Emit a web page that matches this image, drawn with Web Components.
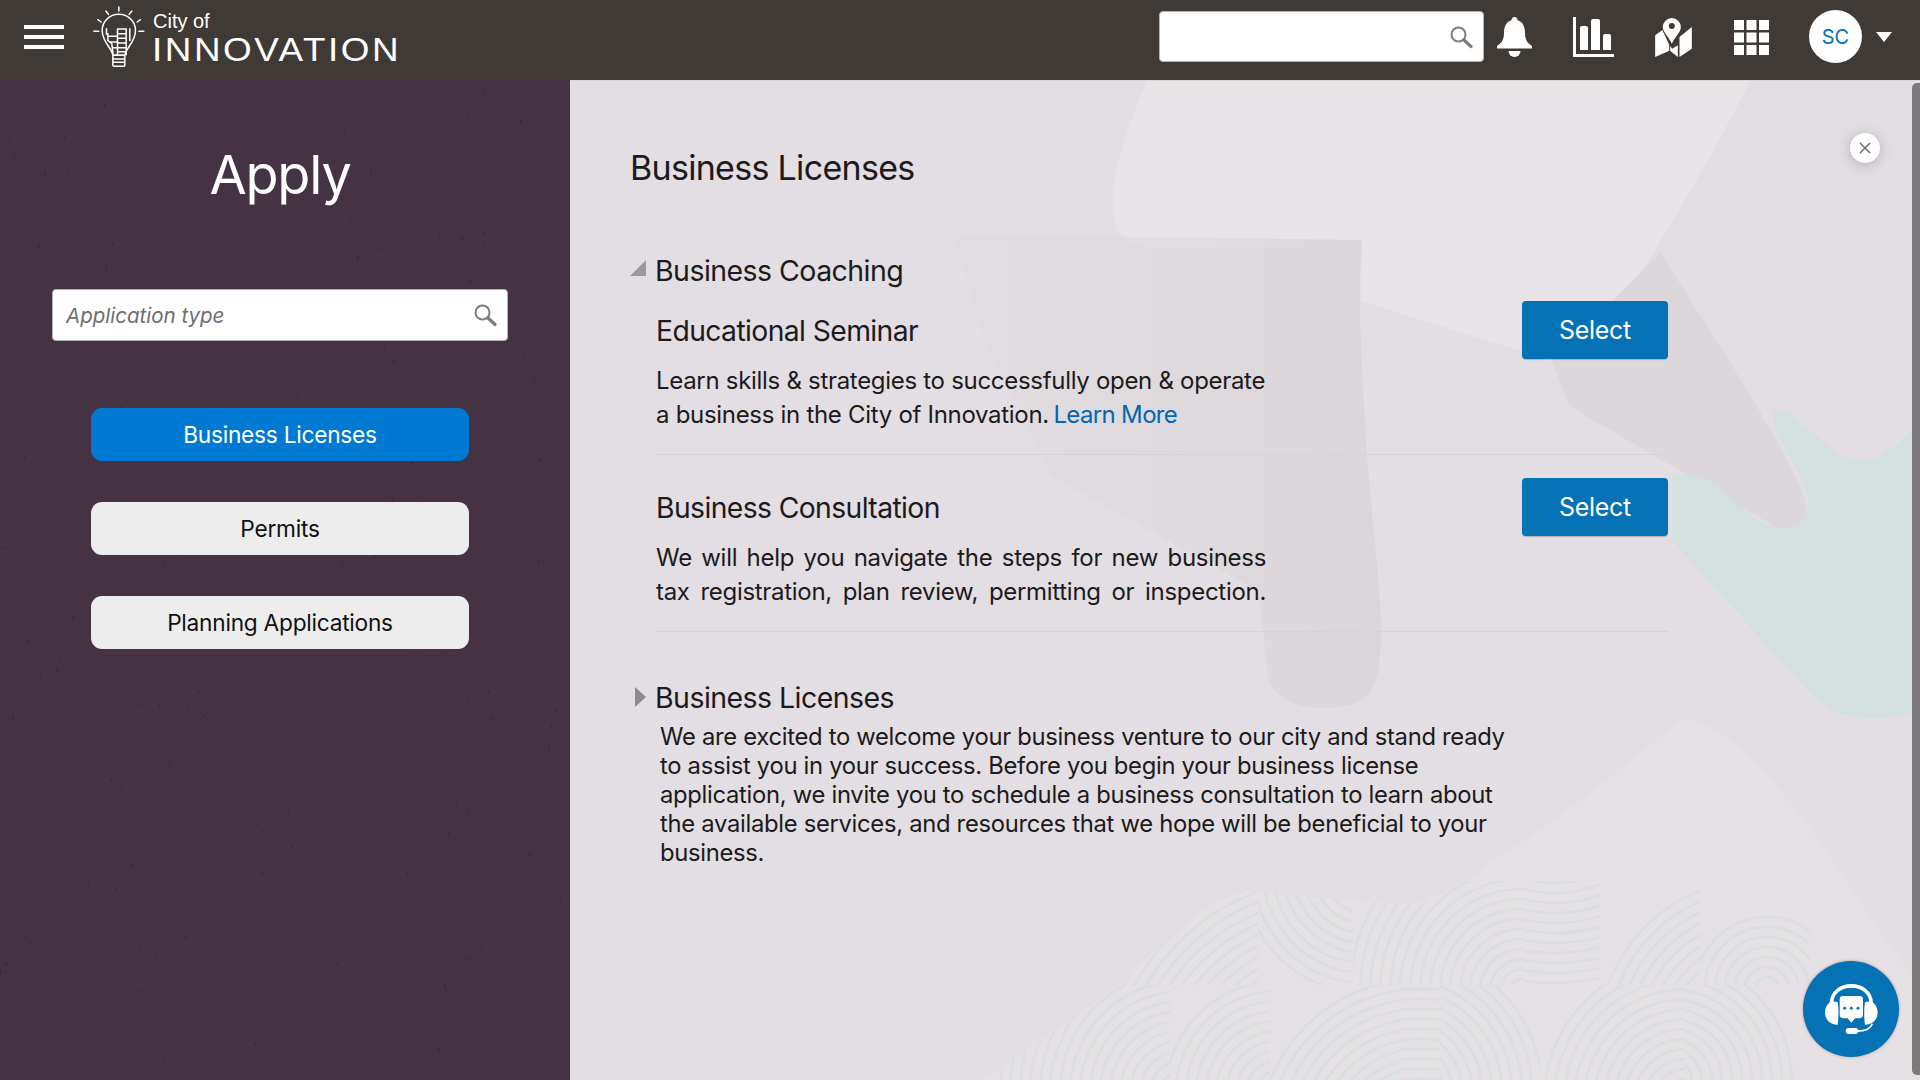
<!DOCTYPE html>
<html lang="en">
<head>
<meta charset="utf-8">
<title>Apply - City of Innovation</title>
<style>
  html, body { margin: 0; height: 100%; overflow: hidden; }
  body { font-family: Inter, "Liberation Sans", sans-serif; }
  #shell { display: flex; flex-direction: column; height: 1080px; }
  #body-row { display: flex; flex: 1; min-height: 0; }
</style>
</head>
<body>
<div id="shell">
  <top-bar></top-bar>
  <div id="body-row">
    <apply-panel heading="Apply">
      <nav-button active>Business Licenses</nav-button>
      <nav-button>Permits</nav-button>
      <nav-button>Planning Applications</nav-button>
    </apply-panel>
    <detail-panel heading="Business Licenses">
      <group-header open>Business Coaching</group-header>
      <service-row heading="Educational Seminar">Learn skills &amp; strategies to successfully open &amp; operate<br>a business in the City of Innovation. <a href="#">Learn More</a></service-row>
      <service-row heading="Business Consultation" spread>We will help you navigate the steps for new business<br>tax registration, plan review, permitting or inspection.</service-row>
      <group-header class="second">Business Licenses</group-header>
      <intro-text>We are excited to welcome your business venture to our city and stand ready<br>to assist you in your success. Before you begin your business license<br>application, we invite you to schedule a business consultation to learn about<br>the available services, and resources that we hope will be beneficial to your<br>business.</intro-text>
    </detail-panel>
  </div>
</div>
<script>
const SEARCH_ICON = `<svg viewBox="0 0 24 24" width="24" height="24" fill="none" stroke="#7d7d7d">
  <circle cx="9.5" cy="9.5" r="7" stroke-width="2"/><path d="M15 15l7 6.5" stroke-width="3.2" stroke-linecap="round"/></svg>`;

class SearchField extends HTMLElement {
  constructor() {
    super();
    this.attachShadow({ mode: 'open' });
    const label = this.getAttribute('placeholder') || '';
    this.shadowRoot.innerHTML = `
      <style>
        :host { display: flex; box-sizing: border-box; align-items: center; justify-content: space-between;
          background: #fff; border: 1px solid #b9b4b6; border-radius: 4px; padding: 0 10px 0 13px; }
        span { font: italic 20.5px Inter, "Liberation Sans", sans-serif; color: #6f6f6f; }
      </style>
      <span>${label}</span>${SEARCH_ICON}`;
  }
}
customElements.define('search-field', SearchField);

class TopBar extends HTMLElement {
  constructor() {
    super();
    this.attachShadow({ mode: 'open' });
    this.shadowRoot.innerHTML = `
      <style>
        :host { display: flex; height: 80px; flex: none; align-items: center; background: #3f3a35; color: #fff; }
        .burger { display: flex; flex-direction: column; gap: 6px; margin: -6px 0 0 24px; }
        .burger i { display: block; width: 40px; height: 4px; background: #fff; }
        .bulb { margin: -11px 0 0 24px; flex: none; }
        .brand { display: flex; flex-direction: column; margin: -3px 0 0 4px; font-family: "Liberation Sans", sans-serif; }
        .city { font-size: 20px; line-height: normal; margin: 2px 0 -2px 1px; }
        .name { font-size: 33.5px; line-height: normal; letter-spacing: 2.3px; transform: scaleX(1.1); transform-origin: left; }
        .tools { display: flex; align-items: center; margin-left: auto; height: 100%; }
        search-field { width: 325px; height: 51px; margin-top: -7px; }
        svg.tool { display: block; margin-top: -6px; fill: #fff; }
        .avatar { width: 53px; height: 53px; border-radius: 50%; background: #fff; color: #0572b5; display: flex;
          align-items: center; justify-content: center; font: 20px Inter, "Liberation Sans", sans-serif; margin: -7px 0 0 40px; }
        .caret { width: 0; height: 0; border: 8px solid transparent; border-top: 10px solid #fff; border-bottom: 0; margin: -7px 28px 0 14px; }
      </style>
      <div class="burger"><i></i><i></i><i></i></div>
      <svg class="bulb" width="60" height="64" viewBox="30 8 165 192" fill="none" stroke="#fff" stroke-width="4.5">
        <path d="M115 20v12M76 32l8 10M154 32l-8 10M52 58l10 7M180 58l-10 7M40 93h15M175 93h15" stroke-linecap="round"/>
        <path d="M97 165c-2-22-32-38-32-75a50 48 0 0 1 100 0c0 37-30 53-32 75z"/>
        <rect x="97" y="165" width="36" height="33" rx="4"/>
        <path d="M97 176h36M97 186h36M111 165V86h26v79M111 100h26M111 114h26M111 128h26M111 142h26M111 154h26M111 108l-28 0M82 98v22l12 10 4 35M111 125l-21 0M111 142l-15 0M148 84v38M78 84v20"/>
      </svg>
      <div class="brand"><span class="city">City of</span><span class="name">INNOVATION</span></div>
      <div class="tools">
        <search-field></search-field>
        <svg class="tool" style="margin-left:13px" width="35" height="40" viewBox="0 0 35 40">
          <path d="M17.5 0c2 0 3 1.500 3 3.200 5.500 1.600 7.500 6.500 7.500 12.800 0 6 2 10 7 13v2.500H0V29c5-3 7-7 7-13 0-6.300 2-11.200 7.500-12.800 0-1.700 1-3.200 3-3.200z"/>
          <path d="M11.500 34h12a6 6 0 0 1-12 0z"/>
        </svg>
        <svg class="tool" style="margin-left:41px" width="41" height="40" viewBox="0 0 41 40">
          <path d="M0 0h3v37h38v3H0z"/>
          <path d="M7 11a2 2 0 0 1 2-2h4a2 2 0 0 1 2 2v22H7zM18 4a2 2 0 0 1 2-2h5a2 2 0 0 1 2 2v29h-9zM30 19a2 2 0 0 1 2-2h4a2 2 0 0 1 2 2v14h-8z"/>
        </svg>
        <svg class="tool" style="margin-left:41px" width="37" height="39" viewBox="525 38 110 117">
          <path d="M525 90l22-16 20 44v18l-42 19zM570 122l6 8 17-10v35l-23-19zM598 95l37-30v65l-37 25z"/>
          <path d="M575 38a27 27 0 0 1 27 27c0 16-18 30-27 50-9-20-27-34-27-50a27 27 0 0 1 27-27z" stroke="#3f3a35" stroke-width="6" paint-order="stroke"/>
          <circle cx="575" cy="62" r="9" fill="#3f3a35"/>
        </svg>
        <svg class="tool" style="margin-left:42px" width="35" height="35" viewBox="0 0 35 35">
          <path d="M0 0h10v10H0zM12.500 0h10v10h-10zM25 0h10v10H25zM0 12.500h10v10H0zM12.500 12.500h10v10h-10zM25 12.500h10v10H25zM0 25h10v10H0zM12.500 25h10v10h-10zM25 25h10v10H25z"/>
        </svg>
        <div class="avatar">SC</div>
        <div class="caret"></div>
      </div>`;
  }
}
customElements.define('top-bar', TopBar);

class NavButton extends HTMLElement {
  constructor() {
    super();
    this.attachShadow({ mode: 'open' });
    this.shadowRoot.innerHTML = `
      <style>
        :host { display: flex; width: 378px; height: 53px; align-items: center; justify-content: center; box-sizing: border-box;
          border-radius: 11px; background: #eeeded; color: #111; font-size: 22.700px; letter-spacing: -0.25px; }
        :host([active]) { background: #0079d3; color: #fff; }
      </style>
      <slot></slot>`;
  }
}
customElements.define('nav-button', NavButton);

class ApplyPanel extends HTMLElement {
  constructor() {
    super();
    this.attachShadow({ mode: 'open' });
    // little dark specks in loose clumps, same seed every time
    let seed = 918273, specks = '';
    const rnd = () => {
      seed = (seed * 48271) % 2147483647;
      return ((seed * 48271) % 2147483647) / 2147483647;
    };
    for (let c = 0; c < 90; c++) {
      const cx = rnd() * 570, cy = rnd() * 1000, n = 1 + Math.floor(rnd() * 6);
      for (let i = 0; i < n; i++) {
        const x = (cx + (rnd() - 0.5) * 44).toFixed(1), y = (cy + (rnd() - 0.5) * 44).toFixed(1);
        const h = (1 + rnd() * 4).toFixed(1), a = (rnd() * 50 - 25).toFixed(0), o = (0.12 + rnd() * 0.4).toFixed(2);
        specks += `<rect x="${x}" y="${y}" width="1.300" height="${h}" opacity="${o}" transform="rotate(${a} ${x} ${y})"/>`;
      }
    }
    this.shadowRoot.innerHTML = `
      <style>
        :host { display: flex; position: relative; flex-direction: column; align-items: center; flex: none; width: 570px;
          background: #453343; box-sizing: border-box; padding: 63px 10px 0 0; overflow: hidden; }
        .specks { position: absolute; inset: 0; fill: #2a1f2b; }
        h1 { position: relative; margin: 0; font-size: 54px; line-height: 64px; font-weight: 400; color: #fff; letter-spacing: -1.200px; }
        search-field { position: relative; width: 456px; height: 52px; margin-top: 82px; }
        .list { position: relative; display: flex; flex-direction: column; gap: 41px; margin-top: 67px; }
      </style>
      <svg class="specks" width="570" height="1000">${specks}</svg>
      <h1>${this.getAttribute('heading')}</h1>
      <search-field placeholder="Application type"></search-field>
      <div class="list"><slot></slot></div>`;
  }
}
customElements.define('apply-panel', ApplyPanel);

// the faint fingerprint texture is made of mismatched tiles, like the original artwork
const PRINT_TILES = [
  [550, 800, 138, 104, 760, 1010, 260],
  [688, 800, 95, 104, 795, 790, 125],
  [783, 800, 170, 104, 952, 910, 180],
  [953, 800, 77, 104, 985, 690, 220],
  [1030, 800, 100, 104, 1190, 960, 170],
  [1130, 800, 110, 104, 1197, 908, 80],
  [430, 904, 170, 96, 612, 1012, 210],
  [600, 904, 100, 96, 708, 1012, 120],
  [700, 904, 130, 96, 850, 1060, 170],
  [830, 904, 40, 96, 850, 1240, 340],
  [870, 904, 100, 96, 830, 1010, 150],
  [970, 904, 145, 96, 1116, 1020, 150],
  [1115, 904, 125, 96, 1100, 1000, 130]
];

class DecorBackdrop extends HTMLElement {
  constructor() {
    super();
    this.attachShadow({ mode: 'open' });
    let clips = '', rings = '';
    PRINT_TILES.forEach(([x, y, w, h, cx, cy, max], i) => {
      clips += `<clipPath id="t${i}"><rect x="${x}" y="${y}" width="${w}" height="${h}"/></clipPath>`;
      let arcs = '';
      for (let r = 12; r < max; r += 10) arcs += `<circle cx="${cx}" cy="${cy}" r="${r}"/>`;
      rings += `<g clip-path="url(#t${i})">${arcs}</g>`;
    });
    const hill = 'M1111 638C1050 690 960 760 921 780 895 805 860 822 832 822L783 820 675 810C640 820 610 843 550 904L430 987 410 1000H1350V905C1290 830 1190 640 1111 638z';
    this.shadowRoot.innerHTML = `
      <style>
        :host { display: block; position: absolute; inset: 0; overflow: hidden; }
        svg { display: block; }
      </style>
      <svg width="1350" height="1000" viewBox="0 0 1350 1000">
        <defs>
          <clipPath id="hill"><path d="${hill}"/></clipPath>
          <linearGradient id="fade" x1="0" y1="0" x2="1" y2="0">
            <stop offset="0" stop-color="#d9d5d8" stop-opacity=".2"/>
            <stop offset=".6" stop-color="#d9d5d8" stop-opacity=".55"/>
            <stop offset="1" stop-color="#d9d5d8" stop-opacity=".95"/>
          </linearGradient>
          ${clips}
        </defs>
        <rect width="1350" height="1000" fill="#e3dee3"/>
        <path d="M577 0C555 50 540 100 543 130 545 150 550 160 570 165 640 172 720 166 792 159L791 220 982 280 1055 217C1110 130 1150 60 1180 0z" fill="#e9e4e8"/>
        <path d="M383 153L792 159C788 200 790 260 795 340 800 440 815 520 810 574 808 605 800 620 775 625 745 632 712 625 698 600L689 510 482 395 413 255z" fill="url(#fade)"/>
        <path d="M1090 172L982 280 999 325 1206 446C1222 456 1238 445 1236 425 1234 405 1200 340 1090 172z" fill="#dcd7da"/>
        <path d="M1201 328C1225 330 1240 350 1262 368 1285 385 1310 390 1350 338V628C1320 640 1270 645 1240 612L1102 459V395C1125 388 1145 400 1165 420 1190 445 1225 465 1239 427 1240 395 1205 365 1201 328z" fill="#d4e0e0"/>
        <path d="${hill}" fill="#e6e1e5"/>
        <g clip-path="url(#hill)"><g fill="none" stroke="#d9dfde" stroke-width="2.500">${rings}</g></g>
      </svg>`;
  }
}
customElements.define('decor-backdrop', DecorBackdrop);

class DetailPanel extends HTMLElement {
  constructor() {
    super();
    this.attachShadow({ mode: 'open' });
    this.shadowRoot.innerHTML = `
      <style>
        :host { display: block; position: relative; flex: 1; min-width: 0; overflow: hidden; color: #1c1a1b;
          border-top: 1px solid #d9d6d8; box-sizing: border-box; }
        .content { position: relative; padding: 66px 0 0 60px; width: 1098px; box-sizing: border-box; }
        h2 { margin: 1px 0 65px; font-size: 34px; line-height: 40px; font-weight: 400; letter-spacing: -0.700px; }
        .close { position: absolute; left: 1280px; top: 52px; width: 30px; height: 30px; border-radius: 50%; background: #fff;
          box-shadow: 0 2px 14px rgba(0,0,0,.22); display: flex; align-items: center; justify-content: center; }
        .scroll { position: absolute; right: 0; top: 2px; width: 8px; height: 992px; background: #7c7a7b; border-radius: 5px 0 0 5px; }
        .fab { position: absolute; left: 1233px; top: 880px; width: 96px; height: 96px; border-radius: 50%; background: #0572b5;
          box-shadow: 0 0 3px rgba(120,80,40,.5); }
      </style>
      <decor-backdrop></decor-backdrop>
      <div class="content">
        <h2>${this.getAttribute('heading')}</h2>
        <slot></slot>
      </div>
      <div class="close"><svg width="14" height="14" viewBox="0 0 14 14" fill="none" stroke="#6e6e6e" stroke-width="1.500"><path d="M2 2l10 10M12 2L2 12"/></svg></div>
      <div class="scroll"></div>
      <div class="fab">
        <svg width="96" height="96" viewBox="310 183 288 289">
          <path d="M395 312c0-72 120-72 120 0" fill="none" stroke="#fff" stroke-width="11"/>
          <path d="M394 306c-14 8-19 22-18 36 1 18 18 34 38 33 3-20 3-50 0-68-7-3-14-3-20-1zM516 306c14 8 19 22 18 36-1 18-18 34-38 33-3-20-3-50 0-68 7-3 14-3 20-1z" fill="#fff"/>
          <path d="M430 288h50a10 10 0 0 1 10 10v47a10 10 0 0 1-10 10h-14l-11 14-11-14h-14a10 10 0 0 1-10-10v-47a10 10 0 0 1 10-10z" fill="#fff"/>
          <circle cx="435" cy="325" r="4.500" fill="#0572b5"/><circle cx="455" cy="325" r="4.500" fill="#0572b5"/><circle cx="475" cy="325" r="4.500" fill="#0572b5"/>
          <path d="M518 372c-4 14-20 22-46 22" fill="none" stroke="#fff" stroke-width="5"/>
          <rect x="438" y="385" width="38" height="18" rx="9" fill="#fff"/>
        </svg>
      </div>`;
  }
}
customElements.define('detail-panel', DetailPanel);

class GroupHeader extends HTMLElement {
  constructor() {
    super();
    this.attachShadow({ mode: 'open' });
    const arrow = this.hasAttribute('open')
      ? '<path d="M0 16L16 0V16z" fill="#9a9a9d"/>'
      : '<path d="M5 0l11 10L5 20z" fill="#8c8b90"/>';
    this.shadowRoot.innerHTML = `
      <style>
        :host { display: flex; align-items: center; box-sizing: border-box; height: 36px; padding-bottom: 2px; gap: 9px;
          font-size: 28.500px; letter-spacing: -0.550px; }
        :host(.second) { margin-top: 48px; }
        svg { flex: none; margin-top: -1px; }
      </style>
      <svg width="16" height="20" viewBox="0 0 16 20">${arrow}</svg><slot></slot>`;
  }
}
customElements.define('group-header', GroupHeader);

class ServiceRow extends HTMLElement {
  constructor() {
    super();
    this.attachShadow({ mode: 'open' });
    this.shadowRoot.innerHTML = `
      <style>
        :host { display: flex; justify-content: space-between; margin-left: 26px; width: 1012px; padding: 12px 0 22px;
          border-bottom: 1px solid #d6d2d5; }
        h3 { margin: 12px 0 15px; font-size: 28.300px; line-height: 36px; font-weight: 400; letter-spacing: -0.600px; }
        .body { width: 610px; font-size: 24px; line-height: 34px; letter-spacing: -0.300px; white-space: nowrap; text-align: justify; }
        :host([spread]) .body { white-space: normal; text-align-last: justify; }
        ::slotted(a) { color: #0566ad; text-decoration: none; letter-spacing: -0.650px; margin-left: -2px; }
        .select { flex: none; width: 146px; height: 58px; background: #0572b5; color: #fff; border-radius: 4px; display: flex;
          align-items: center; justify-content: center; font-size: 25px; letter-spacing: -0.300px; box-shadow: 0 1px 1px rgba(0,0,0,.2); }
      </style>
      <div><h3>${this.getAttribute('heading')}</h3><div class="body"><slot></slot></div></div>
      <div class="select">Select</div>`;
  }
  connectedCallback() {
    if (this.previousElementSibling && this.previousElementSibling.tagName === 'SERVICE-ROW') {
      this.style.paddingTop = '23px';
    }
  }
}
customElements.define('service-row', ServiceRow);

class IntroText extends HTMLElement {
  constructor() {
    super();
    this.attachShadow({ mode: 'open' });
    this.shadowRoot.innerHTML = `
      <style>
        :host { display: block; margin: 6px 0 0 30px; font-size: 23.800px; line-height: 29px; letter-spacing: -0.300px; white-space: nowrap; }
      </style>
      <slot></slot>`;
  }
}
customElements.define('intro-text', IntroText);
</script>
</body>
</html>
